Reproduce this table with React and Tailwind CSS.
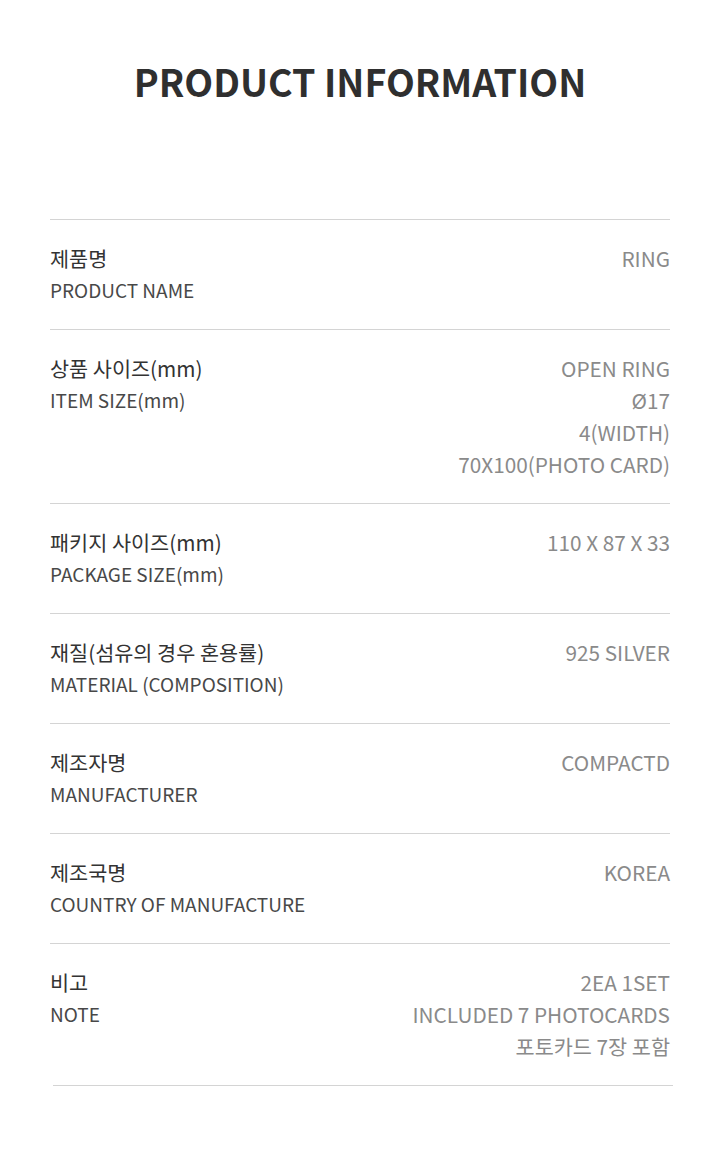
import React from 'react';

const rows = [
    { ko: '제품명', en: 'PRODUCT NAME', values: ['RING'] },
    { ko: '상품 사이즈(mm)', en: 'ITEM SIZE(mm)', values: ['OPEN RING', 'Ø17', '4(WIDTH)', '70X100(PHOTO CARD)'] },
    { ko: '패키지 사이즈(mm)', en: 'PACKAGE SIZE(mm)', values: ['110 X 87 X 33'] },
    { ko: '재질(섬유의 경우 혼용률)', en: 'MATERIAL (COMPOSITION)', values: ['925 SILVER'] },
    { ko: '제조자명', en: 'MANUFACTURER', values: ['COMPACTD'] },
    { ko: '제조국명', en: 'COUNTRY OF MANUFACTURE', values: ['KOREA'] },
    { ko: '비고', en: 'NOTE', values: ['2EA 1SET', 'INCLUDED 7 PHOTOCARDS', '포토카드 7장 포함'] },
];

const RowContent = ({ row }) => (
    <>
        <div>
            <p className="text-[20.75px] text-[#333333]">{row.ko}</p>
            <p className="text-[19px] text-[#484848]">{row.en}</p>
        </div>
        <div className="text-right text-[20.75px] text-[#8a8a8a]">
            {row.values.map((v) => (
                <p key={v}>{v}</p>
            ))}
        </div>
    </>
);

const App = () => {
    const last = rows[rows.length - 1];

    return (
        <div
            className="min-h-[1156px] bg-white"
            style={{ fontFamily: '"Noto Sans CJK KR", "Noto Sans", sans-serif' }}
        >
            <h1 className="pt-[56px] text-center text-[37.5px] font-bold leading-[50px] text-[#2f2f2f]">
                PRODUCT INFORMATION
            </h1>

            <div className="mx-[50px] mt-[113px] border-t border-[#d4d4d4]">
                {rows.slice(0, -1).map((row) => (
                    <div
                        key={row.en}
                        className="flex justify-between border-b border-[#d4d4d4] pt-[22px] pb-[23px] leading-[32px]"
                    >
                        <RowContent row={row} />
                    </div>
                ))}
                <div className="flex justify-between pt-[22px] pb-[23px] leading-[32px]">
                    <RowContent row={last} />
                </div>
            </div>

            {/* last rule is nudged 3px right in the original */}
            <div className="ml-[53px] mr-[47px] border-t border-[#d4d4d4]" />
        </div>
    );
};

export default App;
